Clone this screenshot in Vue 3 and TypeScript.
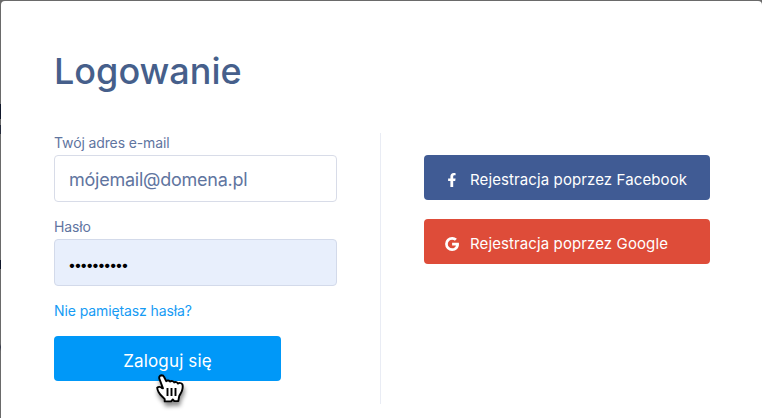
<script setup lang="ts">
import { ref } from 'vue'

const email = ref<string>('mójemail@domena.pl')
const password = ref<string>('1234567890')
</script>

<template>
  <div class="backdrop">
    <main class="dialog">
      <h1 class="title">Logowanie</h1>
      <div class="columns">
        <form class="login" @submit.prevent>
          <label class="label label-email" for="email"><span>Twój adres e-mail</span></label>
          <input id="email" v-model="email" class="field" type="text" />
          <label class="label label-password" for="password"><span>Hasło</span></label>
          <input id="password" v-model="password" class="field filled" type="password" />
          <a class="forgot">Nie pamiętasz hasła?</a>
          <button class="submit" type="submit">
            <span>Zaloguj się</span>
            <svg class="cursor" viewBox="0 0 28 29" width="28" height="29">
              <path d="M5.500 1.200c1.300 0 2.200.8 2.600 1.800l2.100 4.200c.9-1.100 3.200-1 3.900.4 1.200-1 3.500-.7 4.100.8 1.200-.8 3.200-.2 3.600 1.200 1.400-.9 3.700-.6 4.500.6.7 1.700.4 3.900-.1 5.700-.5 2.500-2.100 4.200-3 6.200l-.9 5h-4l-1.500-1.600-1.700 1.900H8.700v-2.300c-1.700-2.200-4.500-3.700-5.900-6.700C1.900 16.900 1.300 15.300 1.200 13.700c1.100-1.200 3.200-1.200 4.800.4L7 14.300 3.500 5.200C2.700 3.200 3.600 1.300 5.500 1.200Z" />
              <path class="fingers" d="M11.500 14v8M15.500 14v8M19.500 14v8" />
            </svg>
          </button>
        </form>
        <section class="social">
          <button class="provider facebook" type="button">
            <svg viewBox="0 0 14 14" width="14" height="14">
              <path d="M5.400 14V8.100H3.100V5.400h2.300V3.500C5.400 1.300 6.700 0 8.700 0c.9 0 1.900.2 1.900.2v2.100H9.500c-1 0-1.300.6-1.300 1.300v1.800h2.400l-.4 2.700h-2V14Z" />
            </svg>
            <span>Rejestracja poprzez Facebook</span>
          </button>
          <button class="provider google" type="button">
            <svg viewBox="0 0 14 14" width="14" height="14">
              <path d="M13.800 5.700H7.100v2.700h3.800c-.4 1.600-1.700 2.900-3.800 2.900a4.300 4.300 0 1 1 0-8.600c1.100 0 2.100.4 2.800 1.100l2-2A6.900 6.900 0 0 0 7.100 0a7 7 0 1 0 0 14c4.200 0 6.900-2.900 6.900-6.900 0-.5-.1-1-.2-1.400Z" />
            </svg>
            <span>Rejestracja poprzez Google</span>
          </button>
        </section>
      </div>
    </main>
  </div>
</template>

<style>
body {
  margin: 0;
  overflow: hidden;
}
</style>

<style scoped>
* {
  box-sizing: border-box;
}

.backdrop {
  height: 418px;
  padding: 1px 0 0 1px;
  background: linear-gradient(#6a6a6a 104px, #10172a 104px 119px, #6a6a6a 119px 125px, #252b3c 125px 134px, #6a6a6a 134px 260px, #10172a 260px 269px, #6a6a6a 269px 344px, #33384a 347px, #6a6a6a 351px);
  font-family: Inter, "Liberation Sans", sans-serif;
}

.dialog {
  height: 417px;
  padding: 46px 52px 0 53px;
  border-radius: 4px 4px 0 0;
  background: #fff;
}

.title {
  height: 48px;
  margin: 0 0 38px;
  color: #465f8b;
  font-size: 36px;
  font-weight: 500;
  line-height: 48px;
}

.columns {
  display: flex;
  height: 271px;
}

.login {
  display: flex;
  flex-direction: column;
  width: 327px;
  border-right: 1px solid #e9ecf4;
}

.label {
  height: 22px;
  color: #5f759f;
  font-size: 14px;
  line-height: 20px;
  letter-spacing: -0.12px;
}

.label-password {
  margin-top: 15px;
}

.field {
  flex: none;
  width: 283px;
  height: 47px;
  padding: 2px 14px 0;
  border: 1px solid #d8dce8;
  border-radius: 4px;
  outline: none;
  background: #fff;
  color: #5f759f;
  font-family: inherit;
  font-size: 18px;
  letter-spacing: -0.24px;
}

.filled {
  padding: 4px 14px 0 13px;
  border-color: #d3daea;
  background: #e8effc;
  color: #000;
  font-size: 14px;
  letter-spacing: -2px;
}

.forgot {
  height: 20px;
  margin-top: 15px;
  color: #169bf4;
  font-size: 14px;
  line-height: 20px;
  letter-spacing: -0.1px;
}

.submit {
  position: relative;
  width: 227px;
  height: 45px;
  margin-top: 15px;
  padding: 4px 0 0;
  border: 0;
  border-radius: 4px;
  background: #0098f8;
  color: #fff;
  font-family: inherit;
  font-size: 17px;
  letter-spacing: 0.16px;
}

.cursor {
  position: absolute;
  top: 38px;
  left: 102px;
  overflow: visible;
  fill: #fff;
  stroke: #000;
  stroke-width: 1.9;
  stroke-linejoin: round;
  filter: drop-shadow(1px 4px 2px rgb(0 0 0 / 45%));
}

.fingers {
  fill: none;
}

.social {
  display: flex;
  flex-direction: column;
  gap: 19px;
  padding: 22px 0 0 43px;
}

.provider {
  display: flex;
  align-items: center;
  gap: 11px;
  width: 286px;
  height: 45px;
  padding: 5px 0 0 21px;
  border: 0;
  border-radius: 4px;
  color: #fff;
  font-family: inherit;
  font-size: 15px;
  letter-spacing: 0.11px;
  white-space: nowrap;
}

.provider span {
  padding-bottom: 2px;
}

.provider svg {
  fill: currentColor;
}

.facebook {
  background: #405b94;
}

.google {
  background: #de4c39;
}
</style>
